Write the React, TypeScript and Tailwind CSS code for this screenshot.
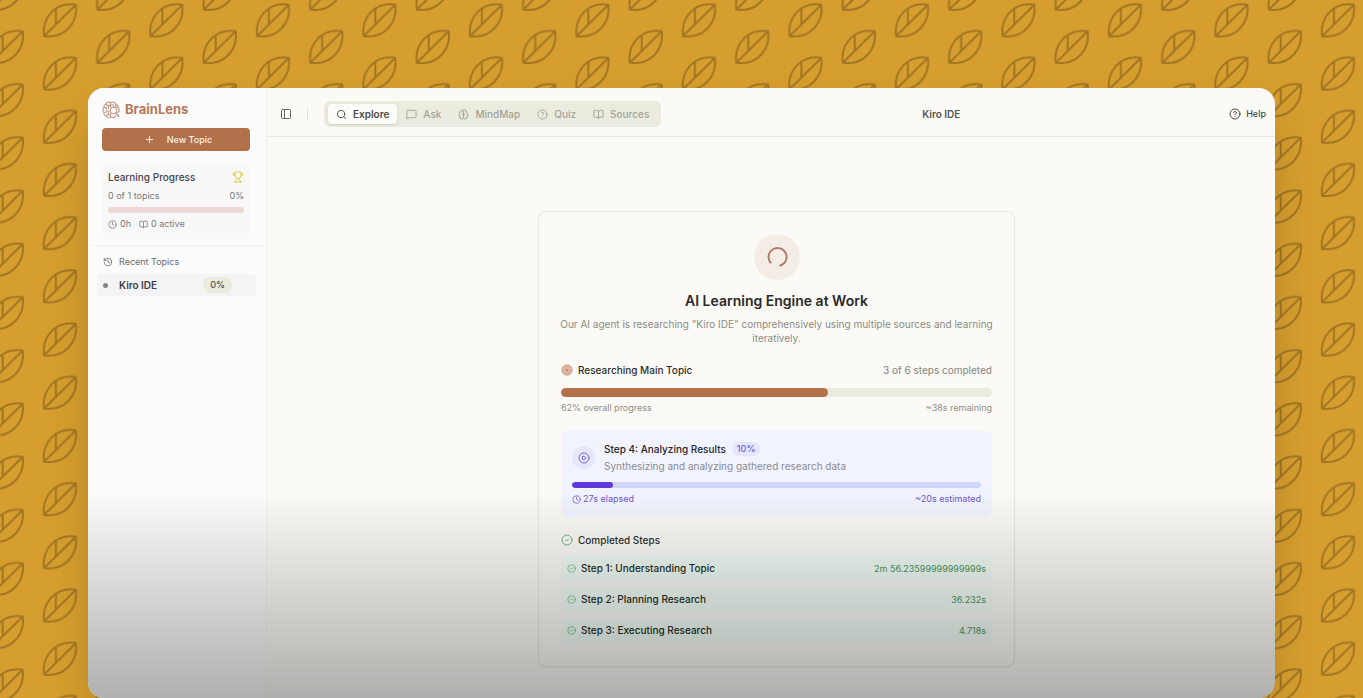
import type { ReactNode } from "react";
import {
  BookOpen,
  Brain,
  CircleCheck,
  CircleHelp,
  CirclePlay,
  Clock,
  History,
  MessageSquare,
  PanelLeft,
  Plus,
  Search,
  Trophy,
} from "lucide-react";

function LeafBackdrop() {
  return (
    <svg className="absolute inset-0 h-full w-full" aria-hidden="true">
      <defs>
        <g id="leaf" fill="none" stroke="#a27522" strokeWidth="2" strokeLinejoin="round">
          <path d="M1.3 33.2C-1 15 12 -1.5 33.2 1.6C35.5 20 22 36 1.3 33.2L33.2 1.6M13.2 6V21.2" />
        </g>
        <pattern id="leaves" width="106.5" height="53.2" patternUnits="userSpaceOnUse">
          <use href="#leaf" x="42.7" y="3" />
          <use href="#leaf" x="-10.5" y="29.6" />
          <use href="#leaf" x="96" y="29.6" />
          <use href="#leaf" x="-10.5" y="-23.6" />
          <use href="#leaf" x="96" y="-23.6" />
        </pattern>
      </defs>
      <rect width="100%" height="100%" fill="url(#leaves)" />
    </svg>
  );
}

function BrainLogo() {
  return (
    <svg className="size-[18px]" viewBox="0 0 36 36" fill="none" stroke="#c29a88" strokeWidth="2.2" strokeLinecap="round" aria-hidden="true">
      <path d="M17 3C13 1 9 3 9 6C5 6 3 10 4 13C1 16 1 21 4 23C3 27 6 31 10 31C12 34 16 34 17 32V26M17 3V12" />
      <path d="M19 3C23 1 27 3 27 6C31 7 33 10 32 13C35 16 35 20 32 23M19 32C22 34 26 33 27 30" />
      <circle cx="23" cy="19" r="6.5" fill="#ffffff" />
      <path d="M28 24L33 31" strokeWidth="2.8" />
      <path d="M9 6C9 9 11 10 13 10V15M4 13C7 12 9 14 9 17M4 23C7 23 9 22 9 20H14M10 31C9 28 11 26 13 26V22M17 7L13 10M17 28L13 26M19 8C22 7 24 9 24 12M27 6C26 9 28 12 32 13" />
    </svg>
  );
}

function TargetDot() {
  return (
    <svg className="size-3" viewBox="0 0 24 24" aria-hidden="true">
      <circle cx="12" cy="12" r="10.5" fill="#dfb8a6" stroke="#c99a86" strokeWidth="1.5" />
      <circle cx="12" cy="12" r="6" fill="none" stroke="#d3a693" strokeWidth="1.5" />
      <circle cx="12" cy="12" r="2" fill="#b1714b" />
    </svg>
  );
}

function Tab({ icon, label, active = false }: { icon: ReactNode; label: string; active?: boolean }) {
  return (
    <button
      type="button"
      role="tab"
      aria-selected={active}
      className={
        active
          ? "flex h-5 items-center gap-[6px] rounded-[4px] bg-[#fcfcf8] px-2 font-semibold text-[#4b4b46] shadow-sm"
          : "flex h-5 items-center gap-[6px] rounded-[4px] px-2 text-[#a3a398]"
      }
    >
      {icon}
      {label}
    </button>
  );
}

function Sidebar() {
  return (
    <aside className="flex w-[179px] shrink-0 flex-col border-r border-[#f4f4f2] bg-[#fbfbfb]">
      <div className="flex flex-col pr-4 pl-[14px]">
        <div className="flex h-10 items-center gap-[5px] pt-1">
          <BrainLogo />
          <span className="text-[13px] font-bold text-[#b5785a]">BrainLens</span>
        </div>
        <button type="button" className="flex h-[23px] items-center justify-center gap-3 rounded-[4px] bg-[#b1714b] pl-1 text-[9px] font-medium text-[#fbf1ea]">
          <Plus className="size-[11px]" />
          New Topic
        </button>
        <section className="mt-3 flex flex-col rounded-[4px] bg-[#f8f8f8] px-[6px] pt-[6px] pb-[7px]">
          <div className="flex h-4 items-center justify-between">
            <h2 className="text-[10px] font-medium text-[#46464c]">Learning Progress</h2>
            <Trophy className="size-3 text-[#dccb4b]" />
          </div>
          <div className="mt-[3px] flex h-4 items-center justify-between text-[9px] text-[#77777c]">
            <span>0 of 1 topics</span>
            <span>0%</span>
          </div>
          <div className="mt-[3px] h-[6px] rounded-full bg-[#ead9d4]" />
          <div className="mt-[3px] flex h-4 items-center gap-2 text-[9px] text-[#77777c]">
            <span className="flex items-center gap-[3px]">
              <Clock className="size-[9px]" />
              0h
            </span>
            <span className="flex items-center gap-[3px]">
              <BookOpen className="size-[9px]" />
              0 active
            </span>
          </div>
        </section>
      </div>
      <hr className="mx-1 mt-[6px] border-[#efefee]" />
      <nav className="flex flex-col pt-2 pr-[10px] pl-[9px]">
        <h2 className="flex h-4 items-center gap-[6px] pl-[6px] text-[9px] text-[#6c6c72]">
          <History className="size-[10px]" />
          Recent Topics
        </h2>
        <a href="#kiro" className="mt-1 flex h-[22px] items-center rounded-[4px] bg-[#f4f4f4] pr-6 pl-[6px]">
          <span className="size-[5px] rounded-full bg-[#858588]" />
          <span className="ml-[11px] flex-1 text-[10px] font-semibold text-[#3f3f44]">Kiro IDE</span>
          <span className="flex h-4 items-center rounded-full bg-[#ebebdd] px-[7px] text-[9px] font-medium text-[#4d4d48]">0%</span>
        </a>
      </nav>
    </aside>
  );
}

function TopBar() {
  return (
    <header className="flex h-[49px] shrink-0 items-center border-b border-[#e9e9e3] pt-1 pr-[9px] pl-[13px]">
      <button type="button" aria-label="Toggle sidebar">
        <PanelLeft className="size-3 text-[#66665f]" />
      </button>
      <span className="ml-[15px] h-3 w-px bg-[#e3e3db]" />
      <div role="tablist" className="ml-4 flex h-[26px] items-center gap-px rounded-md bg-[#ebebdf] px-1 text-[10px] font-medium">
        <Tab active label="Explore" icon={<Search className="size-[11px]" />} />
        <Tab label="Ask" icon={<MessageSquare className="size-[11px]" />} />
        <Tab label="MindMap" icon={<Brain className="size-[11px]" />} />
        <Tab label="Quiz" icon={<CircleHelp className="size-[11px]" />} />
        <Tab label="Sources" icon={<BookOpen className="size-[11px]" />} />
      </div>
      <h1 className="flex-1 pr-2 text-center text-[10px] font-semibold text-[#54544f]">Kiro IDE</h1>
      <button type="button" className="flex items-center gap-[5px] text-[9px] font-medium text-[#4a4a45]">
        <CircleHelp className="size-3" />
        Help
      </button>
    </header>
  );
}

const completed = [
  { title: "Step 1: Understanding Topic", time: "2m 56.23599999999999s" },
  { title: "Step 2: Planning Research", time: "36.232s" },
  { title: "Step 3: Executing Research", time: "4.718s" },
];

function EngineCard() {
  return (
    <section className="w-full max-w-[477px] rounded-lg border border-[#e8e8e2] bg-[#fbfaf6] px-[22px] pt-[22px] pb-[23px] shadow-xs">
      <div className="mx-auto flex size-[46px] items-center justify-center rounded-full bg-[#f4ede6]">
        <svg className="size-6" viewBox="0 0 24 24" fill="none" aria-hidden="true">
          <path d="M6 18.2A9 9 0 1 1 14.6 20.8" stroke="#ad7d68" strokeWidth="1.9" />
        </svg>
      </div>
      <h2 className="mt-[11px] text-center text-[14px] leading-5 font-semibold text-[#2a2a28]">AI Learning Engine at Work</h2>
      <p className="-mx-2 mt-[6px] text-center text-[10px] leading-[14px] text-[#8b8b84]">
        Our AI agent is researching "Kiro IDE" comprehensively using multiple sources and learning iteratively.
      </p>

      <div className="mt-[17px] flex h-4 items-center justify-between text-[10px]">
        <h3 className="flex items-center gap-[5px] font-medium text-[#2e2e2b]">
          <TargetDot />
          Researching Main Topic
        </h3>
        <span className="text-[#84847d]">3 of 6 steps completed</span>
      </div>
      <div className="mt-[10px] h-[9px] overflow-hidden rounded-full bg-[#ebebe0]">
        <div className="h-full w-[62%] rounded-full bg-[#b3714a]" />
      </div>
      <div className="mt-[5px] flex h-3 items-center justify-between text-[9px] text-[#8e8e87]">
        <span>62% overall progress</span>
        <span>~38s remaining</span>
      </div>

      <div className="mt-[17px] flex flex-col rounded-md bg-[#f1f3fe] px-[11px] pt-[10px] pb-3">
        <div className="flex items-center gap-[9px]">
          <span className="flex size-[23px] items-center justify-center rounded-full bg-[#e5e7fb]">
            <CirclePlay className="size-3 text-[#7467dc]" />
          </span>
          <div>
            <h3 className="flex h-4 items-center gap-[6px] text-[10px] font-medium text-[#26262c]">
              Step 4: Analyzing Results
              <span className="flex h-[14px] items-center rounded-full bg-[#e5e5fb] px-[5px] text-[9px] text-[#7561d8]">10%</span>
            </h3>
            <p className="mt-px text-[10px] leading-4 text-[#8b8b92]">Synthesizing and analyzing gathered research data</p>
          </div>
        </div>
        <div className="mt-2 h-[6px] overflow-hidden rounded-full bg-[#d0d6f8]">
          <div className="h-full w-[10%] rounded-full bg-[#6338dc]" />
        </div>
        <div className="mt-[5px] flex h-3 items-center justify-between text-[9px] text-[#6f57cb]">
          <span className="flex items-center gap-[2px]">
            <Clock className="size-[9px]" />
            27s elapsed
          </span>
          <span>~20s estimated</span>
        </div>
      </div>

      <h3 className="mt-[15px] flex h-4 items-center gap-[5px] text-[10px] font-medium text-[#30302d]">
        <CircleCheck className="size-3 text-[#6db481]" />
        Completed Steps
      </h3>
      <ul className="mt-2 flex flex-col gap-[6px]">
        {completed.map((step) => (
          <li key={step.title} className="flex h-[25px] items-center gap-[5px] rounded-[4px] bg-[#f0fbf4] px-[6px]">
            <CircleCheck className="size-[9px] text-[#6db481]" />
            <span className="flex-1 text-[10px] font-medium text-[#242f28]">{step.title}</span>
            <span className="text-[9px] text-[#4b9360]">{step.time}</span>
          </li>
        ))}
      </ul>
    </section>
  );
}

export default function App() {
  return (
    <div className="relative flex min-h-screen flex-col bg-[#d69e2e] px-[88px] pt-[88px] font-['Inter',sans-serif]">
      <LeafBackdrop />
      <div className="relative flex flex-1 overflow-hidden rounded-2xl bg-[#fbfaf6] shadow-2xl">
        <Sidebar />
        <div className="flex min-w-0 flex-1 flex-col">
          <TopBar />
          <main className="flex flex-1 items-start justify-center pt-[74px] pb-[30px] pl-[11px]">
            <EngineCard />
          </main>
        </div>
        <div className="pointer-events-none absolute inset-x-0 bottom-0 h-[208px] bg-linear-to-b from-transparent to-black/30" />
      </div>
    </div>
  );
}
